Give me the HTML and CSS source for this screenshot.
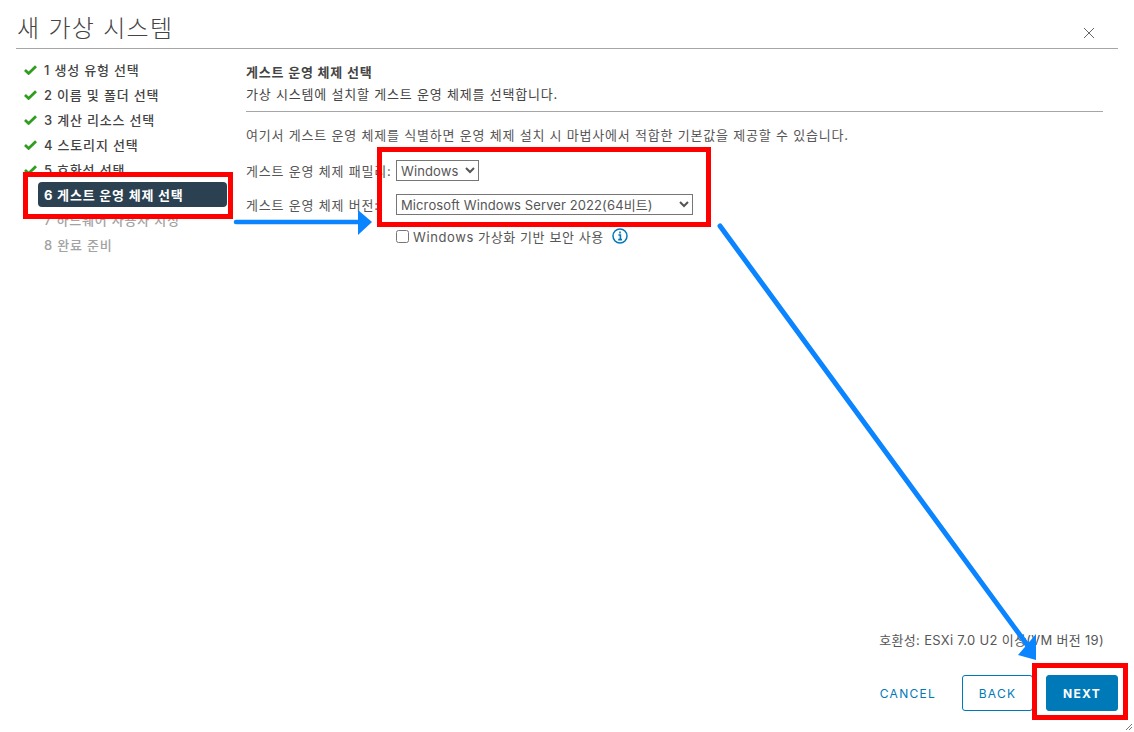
FILE: index.html
```html
<!DOCTYPE html>
<html lang="ko">
<head>
    <meta charset="UTF-8">
    <title>새 가상 시스템</title>
    <link rel="stylesheet" href="styles.css">
</head>
<body>
    <div class="dialog">
        <header class="dialog-header">
            <h1>새 가상 시스템</h1>
            <svg class="close" width="12" height="12" viewBox="0 0 12 12"><path d="M1 1l10 10M11 1L1 11" stroke="#666" stroke-width="1" fill="none"/></svg>
        </header>

        <div class="dialog-body">
            <ul class="steps">
                <li class="step done"><svg class="check" width="13" height="10" viewBox="0 0 13 10"><path d="M1 5l3.6 3.4L12 1.2" stroke="#2f9e1f" stroke-width="2.8" fill="none"/></svg>1 생성 유형 선택</li>
                <li class="step done"><svg class="check" width="13" height="10" viewBox="0 0 13 10"><path d="M1 5l3.6 3.4L12 1.2" stroke="#2f9e1f" stroke-width="2.8" fill="none"/></svg>2 이름 및 폴더 선택</li>
                <li class="step done"><svg class="check" width="13" height="10" viewBox="0 0 13 10"><path d="M1 5l3.6 3.4L12 1.2" stroke="#2f9e1f" stroke-width="2.8" fill="none"/></svg>3 계산 리소스 선택</li>
                <li class="step done"><svg class="check" width="13" height="10" viewBox="0 0 13 10"><path d="M1 5l3.6 3.4L12 1.2" stroke="#2f9e1f" stroke-width="2.8" fill="none"/></svg>4 스토리지 선택</li>
                <li class="step done"><svg class="check" width="13" height="10" viewBox="0 0 13 10"><path d="M1 5l3.6 3.4L12 1.2" stroke="#2f9e1f" stroke-width="2.8" fill="none"/></svg>5 호환성 선택</li>
                <li class="step active">6 게스트 운영 체제 선택</li>
                <li class="step todo">7 하드웨어 사용자 지정</li>
                <li class="step todo">8 완료 준비</li>
            </ul>

            <main class="content">
                <div class="content-head">
                    <h2>게스트 운영 체제 선택</h2>
                    <p>가상 시스템에 설치할 게스트 운영 체제를 선택합니다.</p>
                </div>
                <p class="intro">여기서 게스트 운영 체제를 식별하면 운영 체제 설치 시 마법사에서 적합한 기본값을 제공할 수 있습니다.</p>

                <div class="form-row first">
                    <label for="family">게스트 운영 체제 패밀리:</label>
                    <select id="family" class="family"><option>Windows</option></select>
                </div>
                <div class="form-row">
                    <label for="version">게스트 운영 체제 버전:</label>
                    <select id="version" class="version"><option>Microsoft Windows Server 2022(64비트)</option></select>
                </div>
                <div class="form-row check-row">
                    <input type="checkbox" id="vbs">
                    <label for="vbs">Windows 가상화 기반 보안 사용</label>
                    <svg class="info" width="16" height="16" viewBox="0 0 16 16"><circle cx="8" cy="8" r="7" stroke="#0079b8" stroke-width="1.5" fill="none"/><path d="M8 3.6v1.8M6.4 7h2v4.4M6.2 11.6h3.8" stroke="#0079b8" stroke-width="1.6" fill="none"/></svg>
                </div>
            </main>
        </div>

        <footer class="dialog-footer">
            <p class="compat">호환성: ESXi 7.0 U2 이상(VM 버전 19)</p>
            <div class="buttons">
                <button class="btn link">CANCEL</button>
                <button class="btn outline">BACK</button>
                <button class="btn primary">NEXT</button>
            </div>
        </footer>
    </div>

    <!-- annotations drawn over the screenshot -->
    <div class="mark mark-step"></div>
    <div class="mark mark-form"></div>
    <div class="mark mark-next"></div>
    <svg class="arrows" width="1134" height="732" viewBox="0 0 1134 732">
        <path d="M236 222H360" stroke="#0a84ff" stroke-width="4.5" stroke-linecap="round" fill="none"/>
        <path d="M358 210L372 222L358 235Z" fill="#0a84ff"/>
        <path d="M720 226L1028 646" stroke="#0a84ff" stroke-width="5" stroke-linecap="round" fill="none"/>
        <path d="M1018 655L1036 634L1036 660Z" fill="#0a84ff"/>
    </svg>
    <svg class="grip" width="8" height="8" viewBox="0 0 8 8"><path d="M7 1L1 7M7 4L4 7" stroke="#777" stroke-width="1" fill="none"/></svg>
</body>
</html>
```

FILE: styles.css
```css
* {
    box-sizing: border-box;
}

body {
    margin: 0;
    background: white;
    color: #565656;
    font-family: Inter, "Noto Sans CJK KR", sans-serif;
    font-size: 13px;
    letter-spacing: 0.8px;
    overflow: hidden;
}

.dialog {
    display: flex;
    flex-direction: column;
    height: 732px;
    padding: 0 16px;
}

.dialog-header {
    display: flex;
    justify-content: space-between;
    align-items: center;
    height: 49px;
    border-bottom: 1px solid #a6a6a6;
    padding: 9px 23px 0 1px;
}

.dialog-header h1 {
    margin: 0;
    font-size: 24px;
    font-weight: 300;
    line-height: 30px;
    color: #444;
    letter-spacing: 1.3px;
}

.close {
    margin-top: 8px;
}

.dialog-body {
    display: flex;
    flex: 1;
}

.steps {
    list-style: none;
    margin: 0;
    padding: 8px 0 0 8px;
    width: 230px;
    flex-shrink: 0;
}

.step {
    display: flex;
    align-items: center;
    height: 25px;
    padding-left: 20px;
    font-weight: 500;
    color: #444;
}

.step.done {
    padding-left: 0;
}

.check {
    margin-right: 7px;
}

.step.active {
    width: 189px;
    margin-left: 14px;
    padding-left: 6px;
    background: #2b4151;
    border-radius: 4px;
    color: white;
    font-weight: 700;
}

.step.todo {
    color: #a3a3a3;
}

.content {
    flex: 1;
    padding: 13px 15px 0 0;
}

.content-head {
    height: 50px;
    border-bottom: 1px solid #a6a6a6;
}

.content-head h2 {
    margin: 0;
    font-size: 13px;
    font-weight: 700;
    line-height: 20px;
    color: #444;
}

.content-head p {
    margin: 2px 0 0;
    line-height: 20px;
    color: #444;
}

.intro {
    margin: 13px 0 0;
    line-height: 20px;
}

.form-row {
    display: flex;
    align-items: center;
    height: 21px;
    margin-top: 13px;
}

.form-row.first {
    margin-top: 15px;
}

.form-row label {
    width: 150px;
    white-space: nowrap;
}

.form-row select {
    height: 21px;
    padding: 0;
    background: white;
    border: 1px solid #767676;
    border-radius: 0;
    color: #565656;
    font-family: inherit;
    font-size: 13px;
    letter-spacing: 0.1px;
}

.form-row .family {
    width: 83px;
}

.form-row .version {
    width: 297px;
}

.check-row {
    height: 20px;
    margin-top: 11px;
    padding-left: 150px;
}

.check-row input {
    width: 13px;
    height: 13px;
    margin: 0 4px 0 0;
}

.check-row label {
    width: auto;
    letter-spacing: 0.6px;
}

.info {
    margin-left: 8px;
}

.dialog-footer {
    padding: 0 14px 21px 0;
}

.compat {
    margin: 0 0 25px;
    text-align: right;
    line-height: 20px;
    letter-spacing: 0.3px;
}

.buttons {
    display: flex;
    justify-content: flex-end;
    margin-right: -14px;
}

.btn {
    height: 36px;
    border: 1px solid #0079b8;
    border-radius: 3px;
    font-family: inherit;
    font-size: 12px;
    font-weight: 400;
    letter-spacing: 1.3px;
    color: #0079b8;
    background: white;
}

.btn.link {
    width: 82px;
    margin-right: 13px;
    border: none;
    background: none;
}

.btn.outline {
    width: 71px;
    margin-right: 13px;
}

.btn.primary {
    width: 72px;
    background: #0079b8;
    color: white;
    font-weight: 700;
}

.mark {
    position: absolute;
    border: 5px solid #ff0000;
}

.mark-step {
    left: 23px;
    top: 172px;
    width: 210px;
    height: 47px;
}

.mark-form {
    left: 377px;
    top: 147px;
    width: 334px;
    height: 80px;
}

.mark-next {
    left: 1032px;
    top: 663px;
    width: 96px;
    height: 57px;
}

.arrows {
    position: absolute;
    left: 0;
    top: 0;
}

.grip {
    position: absolute;
    right: 1px;
    bottom: 1px;
}
```
